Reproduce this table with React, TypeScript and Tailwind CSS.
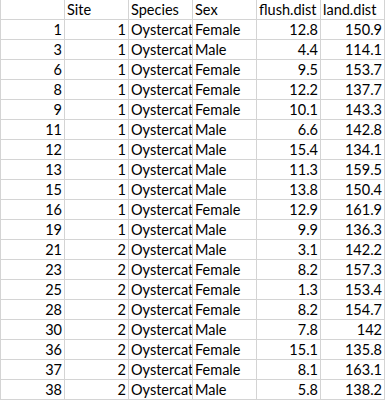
import React from "react";

const rows: [string, string, string, string, string][] = [
  ["1", "1", "Female", "12.8", "150.9"],
  ["3", "1", "Male", "4.4", "114.1"],
  ["6", "1", "Female", "9.5", "153.7"],
  ["8", "1", "Female", "12.2", "137.7"],
  ["9", "1", "Female", "10.1", "143.3"],
  ["11", "1", "Male", "6.6", "142.8"],
  ["12", "1", "Male", "15.4", "134.1"],
  ["13", "1", "Male", "11.3", "159.5"],
  ["15", "1", "Male", "13.8", "150.4"],
  ["16", "1", "Female", "12.9", "161.9"],
  ["19", "1", "Male", "9.9", "136.3"],
  ["21", "2", "Male", "3.1", "142.2"],
  ["23", "2", "Female", "8.2", "157.3"],
  ["25", "2", "Female", "1.3", "153.4"],
  ["28", "2", "Female", "8.2", "154.7"],
  ["30", "2", "Male", "7.8", "142"],
  ["36", "2", "Female", "15.1", "135.8"],
  ["37", "2", "Female", "8.1", "163.1"],
  ["38", "2", "Male", "5.8", "138.2"],
];

const cell =
  "h-[20px] border-r border-b border-[#d4d4d4] overflow-hidden whitespace-nowrap leading-[20px] text-black";
const L = cell + " pl-[2px] text-left";
const R = cell + " pr-[2px] text-right";

export default function App() {
  return (
    <div
      className="w-[385px] h-[401px] bg-white"
      style={{ fontFamily: "Lato, 'Liberation Sans', sans-serif" }}
    >
      <div className="grid grid-cols-[65px_64px_64px_64px_64px_64px] text-[14.5px]">
        <div className={L + " border-l"}></div>
        <div className={L}>Site</div>
        <div className={L}>Species</div>
        <div className={L}>Sex</div>
        <div className={L}>flush.dist</div>
        <div className={L}>land.dist</div>
        {rows.map((r, i) => (
          <React.Fragment key={i}>
            <div className={R + " border-l"}>{r[0]}</div>
            <div className={R}>{r[1]}</div>
            <div className={L + " text-clip"}>Oystercatcher</div>
            <div className={L}>{r[2]}</div>
            <div className={R}>{r[3]}</div>
            <div className={R}>{r[4]}</div>
          </React.Fragment>
        ))}
      </div>
    </div>
  );
}
